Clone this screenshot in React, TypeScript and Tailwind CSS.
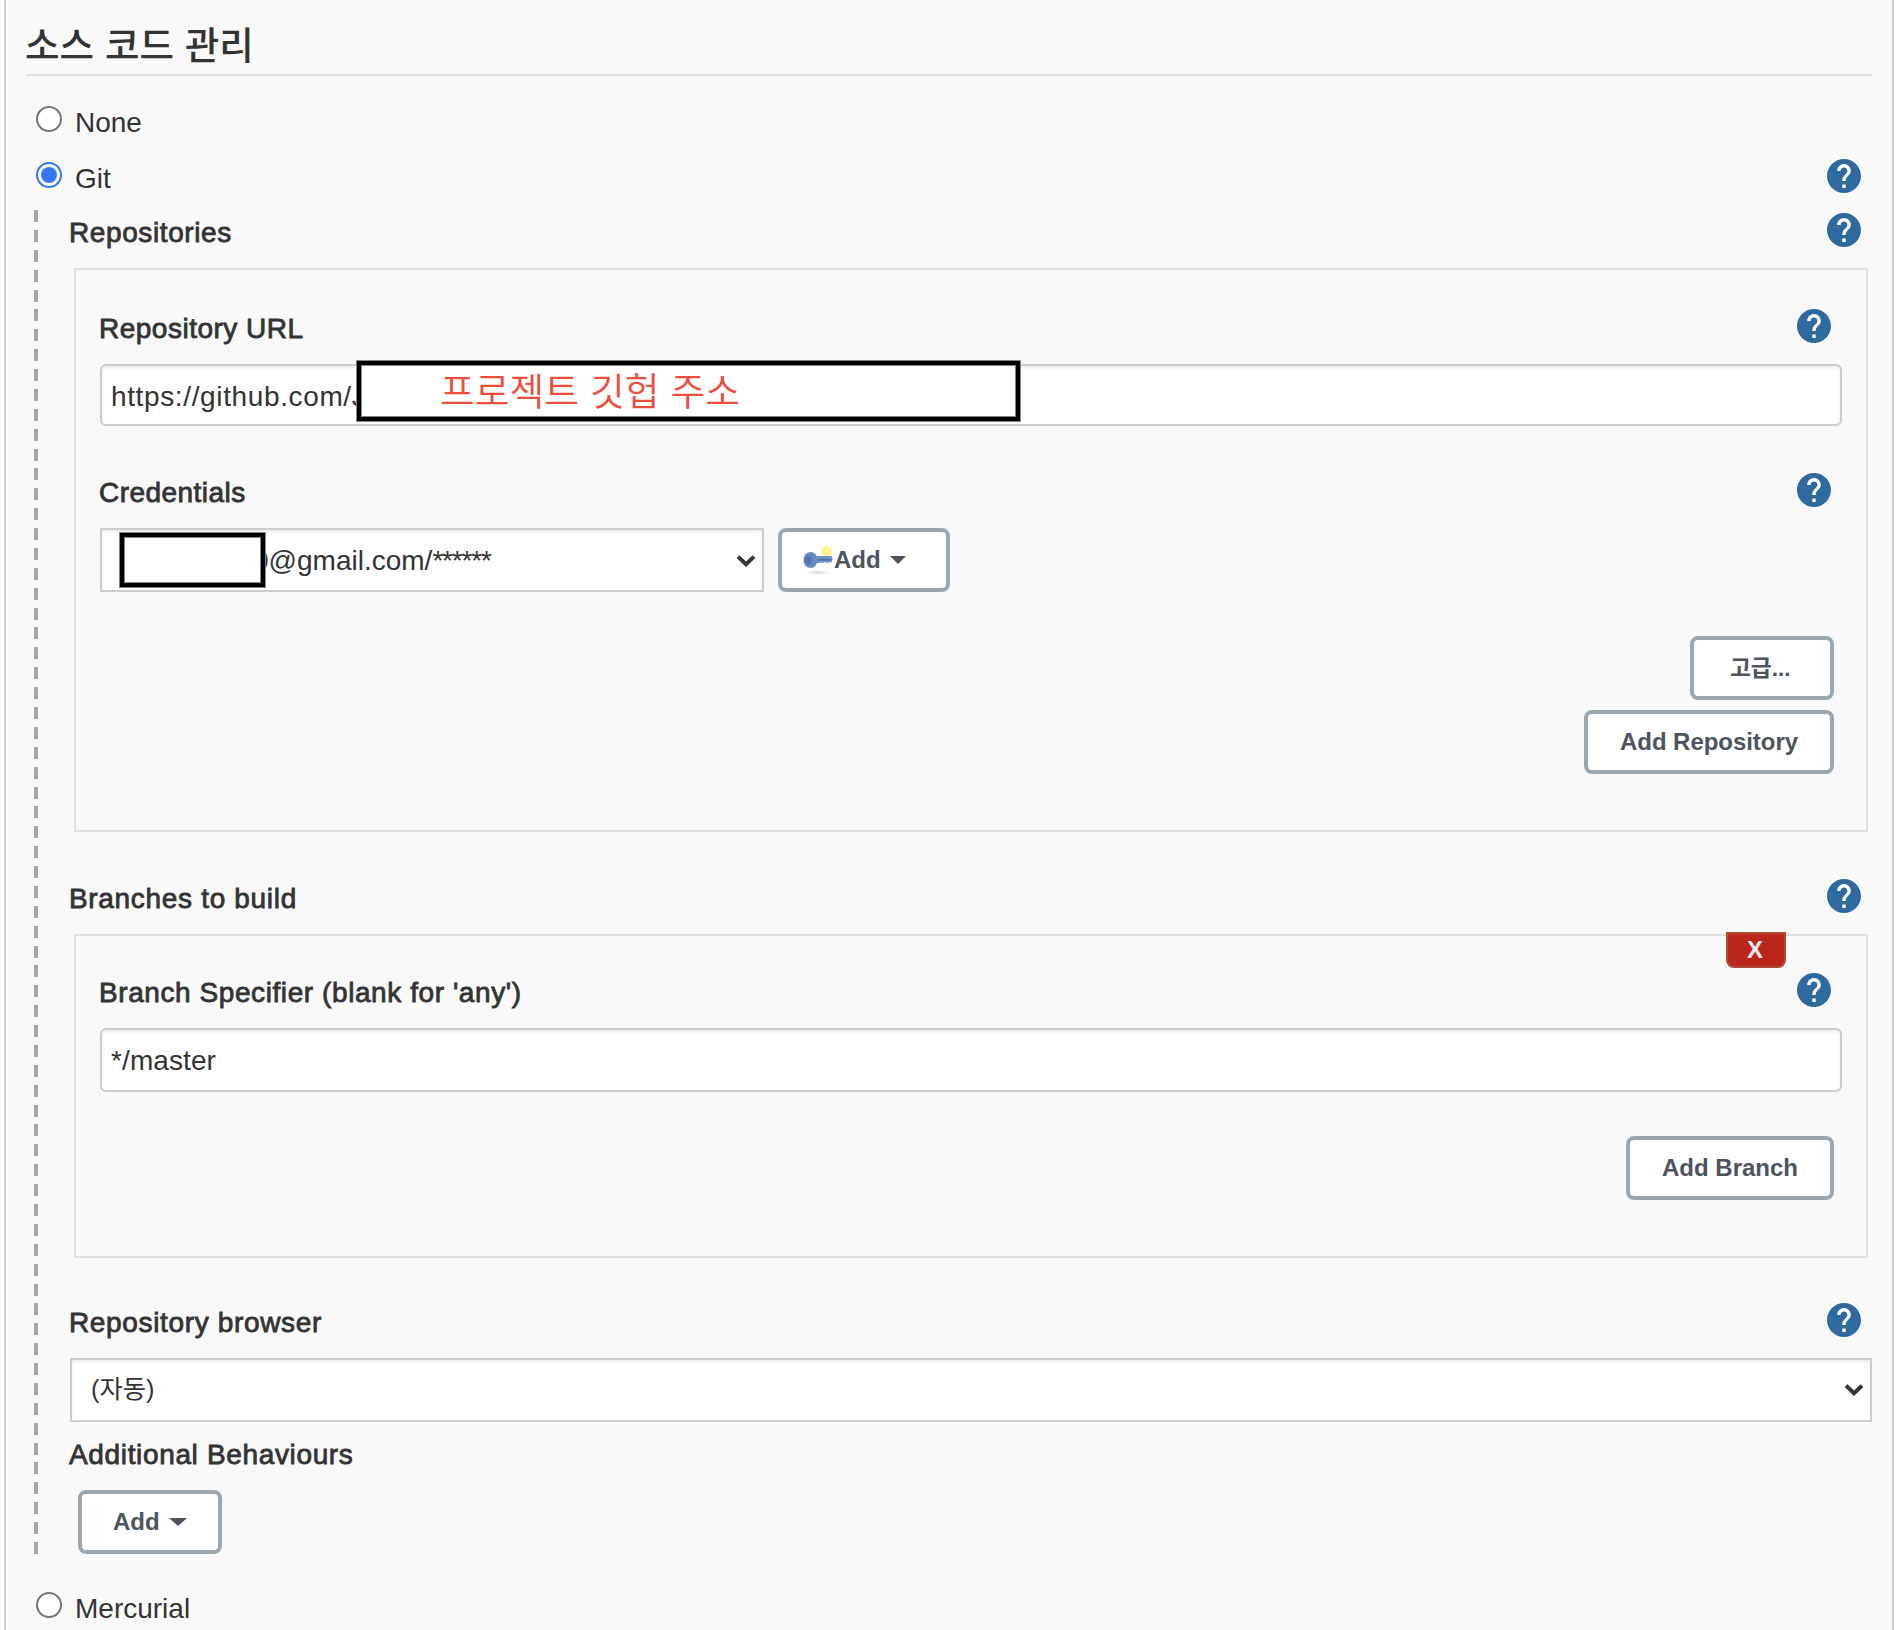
import type { ReactNode } from "react";

function Help() {
  return (
    <svg viewBox="2 2 20 20" className="mt-px mr-[11px] h-[34px] w-[34px] shrink-0">
      <circle cx="12" cy="12" r="9" fill="#fff" />
      <path
        fill="#2f6a9f"
        d="M12 2C6.48 2 2 6.48 2 12s4.48 10 10 10 10-4.48 10-10S17.52 2 12 2zm1 17h-2v-2h2v2zm2.07-7.75l-.9.92C13.45 12.9 13 13.5 13 15h-2v-.5c0-1.1.45-2.1 1.17-2.83l1.24-1.26c.37-.36.59-.86.59-1.41 0-1.1-.9-2-2-2s-2 .9-2 2H8c0-2.21 1.79-4 4-4s4 1.79 4 4c0 .88-.36 1.68-.93 2.25z"
      />
    </svg>
  );
}

function Radio({ label, checked = false, help = false }: { label: string; checked?: boolean; help?: boolean }) {
  return (
    <div className="flex h-10 items-start justify-between pl-[10px]">
      <div className="flex items-start">
        <span
          className={
            checked
              ? "mt-1 flex h-[26px] w-[26px] items-center justify-center rounded-full border-2 border-[#3478f6] bg-white"
              : "mt-1 h-[26px] w-[26px] rounded-full border-2 border-[#767676] bg-white"
          }
        >
          {checked && <span className="h-4 w-4 rounded-full bg-[#3478f6]" />}
        </span>
        <span className="mt-px ml-[13px] leading-10">{label}</span>
      </div>
      {help && <Help />}
    </div>
  );
}

function Label({ children, help = false, spacing = "tracking-[0.65px]" }: { children: ReactNode; help?: boolean; spacing?: string }) {
  return (
    <div className="flex h-10 items-start justify-between">
      <span className={`mt-px -ml-px leading-10 whitespace-pre [-webkit-text-stroke:0.8px_#333] ${spacing}`}>{children}</span>
      {help && <Help />}
    </div>
  );
}

function Button({ children, className }: { children: ReactNode; className: string }) {
  return (
    <button
      className={`flex h-16 shrink-0 items-center rounded-lg border-4 border-[#9ba7af] bg-white text-2xl leading-8 font-bold whitespace-pre text-[#4d545d] ${className}`}
    >
      {children}
    </button>
  );
}

function Caret({ className }: { className: string }) {
  return (
    <svg viewBox="0 0 18 8" className={`h-2 shrink-0 ${className}`} preserveAspectRatio="none">
      <path d="M0 0h18L9 8z" fill="#4d545d" />
    </svg>
  );
}

function Chevron() {
  return (
    <svg viewBox="0 0 20 14" className="mr-[6px] ml-auto h-[14px] w-5">
      <path d="M2 2.6 10 10.2 18 2.6" fill="none" stroke="#333" strokeWidth="4" />
    </svg>
  );
}

function KeyIcon() {
  return (
    <svg viewBox="0 0 32 32" className="h-8 w-8 shrink-0">
      <defs>
        <radialGradient id="key-head" cx="0.35" cy="0.5" r="0.7">
          <stop offset="0" stopColor="#4a6796" />
          <stop offset="0.5" stopColor="#6288c4" />
          <stop offset="1" stopColor="#6d92cb" />
        </radialGradient>
        <radialGradient id="key-shadow">
          <stop offset="0" stopColor="#999" stopOpacity="0.4" />
          <stop offset="1" stopColor="#999" stopOpacity="0" />
        </radialGradient>
      </defs>
      <ellipse cx="16" cy="28.5" rx="13" ry="2.5" fill="url(#key-shadow)" />
      <circle cx="24.5" cy="7.5" r="5" fill="#fff36b" opacity="0.85" />
      <circle cx="24.5" cy="7.5" r="1.8" fill="#fffbc8" />
      <path d="M12 12h17.5l1 2.5-1 4-2.500-.5-2 1-2-1-2 1-2-.5-2 .5H12z" fill="#6d92cb" />
      <path d="M14 15.800h15.500" stroke="#4d70a8" strokeWidth="1.500" />
      <ellipse cx="8.500" cy="16" rx="7" ry="8" fill="url(#key-head)" />
      <ellipse cx="6" cy="16" rx="1.500" ry="3" fill="#55709c" />
    </svg>
  );
}

const field = "flex w-full items-center border-2 border-[#ccc] bg-white shadow-[inset_0_2px_3px_rgba(0,0,0,0.08)]";
const redaction = "absolute border-4 border-black bg-white shadow-[0_0_0_1px_#858585,inset_0_0_0_1px_#858585]";

export default function App() {
  return (
    <div className="h-[1630px] overflow-hidden bg-white px-1 font-['Liberation_Sans','Noto_Sans_CJK_KR',sans-serif] text-[28px] text-[#333]">
      <div className="h-full w-[1890px] border-x-2 border-[#ccc] bg-[#f9f9f9] pr-5 pl-5">
        <h2 className="h-[76px] border-b-2 border-[#e0e0e0] pt-[15px] font-['Noto_Sans_CJK_KR',sans-serif] text-[37.5px] leading-[56px] font-medium [word-spacing:2.500px]">
          <span className="-ml-px">소스 코드 관리</span>
        </h2>
        <div className="mt-[26px] flex flex-col gap-4">
          <Radio label="None" />
          <Radio label="Git" checked help />
        </div>

        <section className="mt-3 ml-2 flex h-[1344px]">
          <div className="w-1 shrink-0 bg-[repeating-linear-gradient(to_bottom,#a6a6a6_0_12px,transparent_12px_19.880px)]" />
          <div className="ml-8 flex-1 pt-0.5">
            <Label help spacing="tracking-[0.6px]">Repositories</Label>
            <div className="mx-1 mt-4 h-[564px] border-2 border-[#e0e0e0] px-6 pt-[38px]">
              <Label help spacing="tracking-[0.5px]">Repository URL</Label>
              <div className={`relative mt-4 h-[62px] rounded-md pt-[3px] pl-[9px] ${field}`}>
                <span className="tracking-[0.63px]">https://github.com/J</span>
                <div className={`-top-[5px] left-[255px] flex h-[60px] w-[663px] items-center pb-[5px] pl-[79px] ${redaction}`}>
                  <span className="font-['Noto_Sans_CJK_KR',sans-serif] text-[37.800px] leading-none font-[350] whitespace-pre text-[#eb4e3d] [word-spacing:2.500px]">
                    프로젝트 깃헙 주소
                  </span>
                </div>
              </div>

              <div className="mt-[46px]">
                <Label help spacing="tracking-[0.45px]">Credentials</Label>
              </div>
              <div className="mt-4 flex gap-[14px]">
                <div className="w-[664px]">
                  <div className={`relative h-16 pt-px pl-[151px] ${field}`}>
                    0@gmail.com/<span className="tracking-[-1.150px]">******</span>
                    <Chevron />
                    <div className={`top-[3px] left-[18px] h-[54px] w-[145px] ${redaction}`} />
                  </div>
                </div>
                <Button className="w-[172px] pl-5">
                  <KeyIcon />
                  Add
                  <Caret className="ml-[9px] w-4" />
                </Button>
              </div>

              <div className="mt-11 mr-2 flex flex-col items-end gap-[10px]">
                <Button className="w-36 pl-[36px]">
                  <span className="text-[22.700px]">고급...</span>
                </Button>
                <Button className="w-[250px] pl-8">
                  <span className="tracking-[-0.050px]">Add Repository</span>
                </Button>
              </div>
            </div>

            <div className="mt-[46px]">
              <Label help spacing="tracking-[0.68px]">Branches to build</Label>
            </div>
            <div className="relative mx-1 mt-4 h-[324px] border-2 border-[#e0e0e0] px-6 pt-9">
              <button className="absolute -top-1 right-20 flex h-9 w-[60px] items-center justify-center rounded-b-lg border-2 border-[#ae4a35] bg-[#bb261a] pr-0.5 text-2xl leading-none font-bold text-[#eee]">
                X
              </button>
              <Label help spacing="tracking-[0.58px]">Branch Specifier (blank for 'any')</Label>
              <div className={`mt-4 h-16 rounded-md pt-[2px] pl-[9px] ${field}`}>
                <span className="tracking-[0.1px]">*/master</span>
              </div>
              <div className="mt-11 mr-2 flex justify-end">
                <Button className="w-52 pl-8">Add Branch</Button>
              </div>
            </div>

            <div className="mt-[44px]">
              <Label help>Repository browser</Label>
            </div>
            <div className={`mt-4 h-16 pl-[19px] ${field}`}>
              <span className="text-[25.300px]">(자동)</span>
              <Chevron />
            </div>
            <div className="mt-3">
              <Label>Additional Behaviours</Label>
            </div>
            <Button className="mt-4 ml-2 w-36 pl-[31px]">
              Add
              <Caret className="ml-[9px] w-[18px]" />
            </Button>
          </div>
        </section>

        <div className="mt-[34px]">
          <Radio label="Mercurial" />
        </div>
      </div>
    </div>
  );
}
